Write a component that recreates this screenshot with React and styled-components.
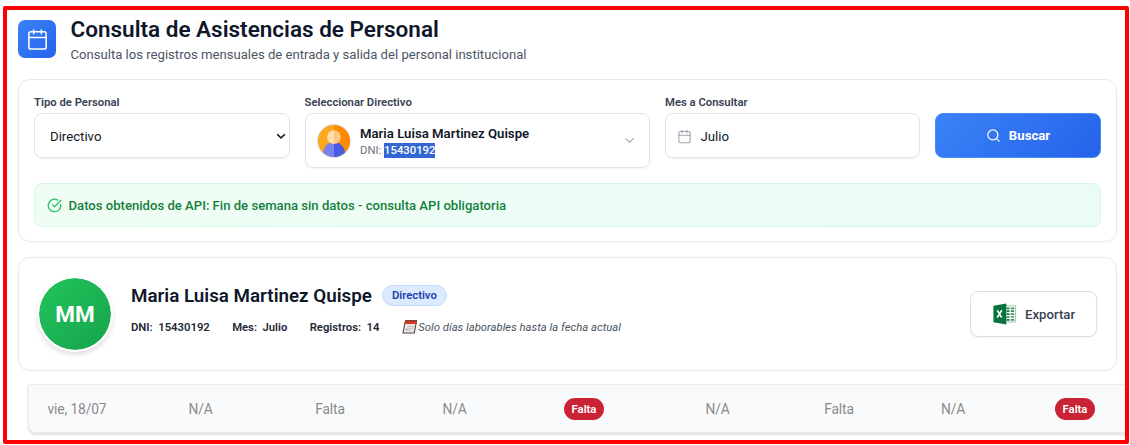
import React from "react";
import styled, { createGlobalStyle } from "styled-components";
import { Calendar, Search, ChevronDown, CircleCheckBig } from "lucide-react";

const GlobalStyle = createGlobalStyle`
  * { box-sizing: border-box; }
  body {
    margin: 0;
    background: #fff;
    color: #0f172a;
    font-family: Roboto, "Liberation Sans", sans-serif;
    overflow: hidden;
  }
`;

const Frame = styled.main`
  margin: 6px 1px 1px 3px;
  width: 1126px;
  height: 438px;
  border: 4px solid #fe0000;
  border-radius: 2px;
  padding: 5px 0 0 11px;
  overflow: hidden;
  white-space: nowrap;
`;

const Header = styled.header`
  display: flex;
  gap: 14.5px;
  height: 64px;
`;

const HeaderIcon = styled.div`
  display: flex;
  align-items: center;
  justify-content: center;
  width: 38px;
  height: 38px;
  margin-top: 5px;
  border-radius: 7px;
  color: #fff;
  background: linear-gradient(135deg, #3b82f6, #2563eb);
`;

const Title = styled.h1`
  margin: 0;
  font-size: 22.5px;
  line-height: 29px;
  font-weight: 600;
`;

const Subtitle = styled.p`
  margin: 2px 0 0;
  font-size: 13.12px;
  line-height: 18px;
  color: #4b5563;
`;

const Card = styled.section`
  width: 1099px;
  border: 1px solid #e9eaed;
  border-radius: 12px;
  background: #fff;
  box-shadow: 0 1px 2px rgba(0, 0, 0, 0.03);
`;

const FilterCard = styled(Card)`
  height: 163px;
  padding: 13px 15px;
`;

const Filters = styled.div`
  display: grid;
  grid-template-columns: 255.5px 345.5px 255px 166px;
  gap: 15px;
  height: 90px;
  align-items: start;
`;

const Label = styled.div`
  height: 20px;
  font-size: 11.3px;
  line-height: 19px;
  font-weight: 600;
  color: #374151;
`;

const Control = styled.div`
  display: flex;
  align-items: center;
  height: ${(p) => (p.$tall ? 55 : 45)}px;
  padding: ${(p) => p.$pad};
  gap: ${(p) => p.$gap || 0}px;
  border: 1px solid #e2e4e9;
  border-radius: 8px;
  font-size: 13.2px;
  color: #111827;
  box-shadow: 0 1px 2px rgba(0, 0, 0, 0.05);
`;

const Grow = styled.div`
  flex: 1;
`;

const PersonName = styled.div`
  padding-top: 2px;
  font-size: 13.2px;
  line-height: 17px;
  font-weight: 600;
`;

const PersonDni = styled.div`
  font-size: 11.3px;
  line-height: 17px;
  color: #6b7280;
`;

const Selected = styled.span`
  display: inline-block;
  height: 15px;
  line-height: 15px;
  color: #fff;
  font-weight: 500;
  background: #3367d1;
`;

const SearchButton = styled.button`
  display: flex;
  align-items: center;
  justify-content: center;
  gap: 8px;
  width: 166px;
  height: 45px;
  margin-top: 20px;
  padding: 0;
  border: 1px solid #4b8bf5;
  border-radius: 8px;
  font: 700 13.2px Roboto, sans-serif;
  color: #fff;
  background: linear-gradient(135deg, #3b82f6, #2563eb);
`;

const Notice = styled.div`
  display: flex;
  align-items: center;
  gap: 7px;
  width: 1067px;
  height: 44px;
  padding: 0 12px 0 11.5px;
  border: 1px solid #d1fae0;
  border-radius: 8px;
  font-size: 13.12px;
  font-weight: 500;
  color: #15803d;
  background: linear-gradient(135deg, #f0fdf4, #ecfdf5 50%, #eafcf4);
`;

const ProfileCard = styled(Card)`
  display: flex;
  align-items: center;
  height: 114px;
  margin-top: 15px;
  padding: 0 19px 0 18px;
`;

const Avatar = styled.div`
  display: flex;
  align-items: center;
  justify-content: center;
  width: 76px;
  height: 76px;
  border: 2px solid #fff;
  border-radius: 50%;
  font-size: 22.5px;
  font-weight: 700;
  color: #fff;
  background: linear-gradient(135deg, #22c55e, #16a34a) border-box;
  background-clip: padding-box;
  box-shadow: 0 3px 5px rgba(0, 0, 0, 0.13);
`;

const Profile = styled.div`
  flex: 1;
  margin: 0 0 10px 18px;
`;

const NameRow = styled.div`
  display: flex;
  align-items: center;
  gap: 10px;
`;

const Name = styled.h2`
  margin: 0;
  font-size: 18.8px;
  line-height: 26px;
  font-weight: 600;
`;

const RoleBadge = styled.span`
  height: 21px;
  padding: 0 9px;
  border: 1px solid #bfdbfe;
  border-radius: 11px;
  font-size: 11.3px;
  line-height: 19px;
  font-weight: 600;
  color: #1e40af;
  background: #dbeafe;
`;

const MetaRow = styled.div`
  display: flex;
  gap: 22.3px;
  margin-top: 10px;
  font-size: 11.3px;
  line-height: 17px;
  font-weight: 600;
  color: #1f2937;
`;

const MetaItem = styled.span`
  display: flex;
  gap: 5.5px;
`;

const Note = styled.span`
  display: flex;
  align-items: center;
  gap: 0.5px;
  font-weight: 400;
  font-style: italic;
  color: #4b5563;
`;

const ExportButton = styled.button`
  display: flex;
  align-items: center;
  gap: 8.5px;
  width: 127px;
  height: 46px;
  padding: 0 0 0 21.5px;
  border: 1px solid #dcdfe5;
  border-radius: 8px;
  font: 500 13.2px Roboto, sans-serif;
  color: #374151;
  background: #fff;
  box-shadow: 0 1px 2px rgba(0, 0, 0, 0.05);
`;

const Table = styled.div`
  display: grid;
  grid-template-columns: 96px 151px 108px 141px 118px 149px 94px 134px 110px;
  align-items: center;
  justify-items: center;
  width: 1130px;
  height: 49px;
  margin: 13px 0 0 10px;
  border: 1px solid #e9ebee;
  border-radius: 0 0 8px 8px;
  background: #f9fafc;
  font-size: 13.8px;
  letter-spacing: -0.12px;
  color: #8b8b8b;
  box-shadow: 0 2px 3px rgba(0, 0, 0, 0.13);
`;

const Tag = styled.span`
  height: 22px;
  padding: 0 7.5px;
  border-radius: 11px;
  font-size: 11.3px;
  letter-spacing: 0;
  line-height: 23px;
  font-weight: 600;
  color: #fff;
  background: #c92335;
`;

const PersonPicture = () => (
  <svg width="34" height="34" viewBox="0 0 34 34">
    <defs>
      <clipPath id="disc"><circle cx="17" cy="17" r="16" /></clipPath>
    </defs>
    <circle cx="17" cy="17" r="16.7" fill="#cfd3da" />
    <g clipPath="url(#disc)">
      <path d="M0 0H17V34H0z" fill="#ffa61f" />
      <path d="M17 0H34V34H17z" fill="#ff8a00" />
      <path d="M5.5 34C5.5 23 10 18.3 17 18.3V34z" fill="#7c83ee" />
      <path d="M28.5 34C28.5 23 24 18.3 17 18.3V34z" fill="#4a5be4" />
    </g>
    <path d="M17 6.2a6.9 6.9 0 0 0 0 13.8z" fill="#ffdda8" />
    <path d="M17 6.2a6.9 6.9 0 0 1 0 13.8z" fill="#ffc882" />
  </svg>
);

const NotepadIcon = () => (
  <svg width="16" height="14" viewBox="0 0 16 14">
    <path d="M3.4 1H14.6L12.2 13H1z" fill="#eceae8" stroke="#4a4544" strokeWidth="1.1" />
    <path d="M3.4 .8H14.8L14.2 4H2.8z" fill="#d9391f" />
    <path d="M3.4 .8H14.8" stroke="#5c2720" strokeWidth=".9" />
    <path d="M5 6.3H12M4.6 8.3H11.6M4.2 10.3H9" stroke="#b9b4b2" strokeWidth=".8" />
    <path d="M3.5 9.5h1.6" stroke="#e48a78" strokeWidth="1.2" />
  </svg>
);

const ExcelIcon = () => (
  <svg width="24" height="22" viewBox="0 0 24 22">
    <path d="M12 2.8H22.6V19H12z" fill="#fff" stroke="#8fc3a5" strokeWidth=".9" />
    <path d="M13.5 5.3h3M13.5 8.2h3M13.5 11.1h3M13.5 14h3M13.5 16.8h3" stroke="#1d7a48" strokeWidth="1.7" />
    <path d="M17.7 5.3h3.5M17.7 8.2h3.5M17.7 11.1h3.5M17.7 14h3.5M17.7 16.8h3.5" stroke="#3c9262" strokeWidth="1.7" />
    <path d="M.4 2.8L13.3 .4V21.6L.4 19.2z" fill="#08733d" />
    <path d="M4.3 7.3L8.7 14.5M8.8 7.3L4.2 14.5" stroke="#fff" strokeWidth="1.6" />
  </svg>
);

const SelectArrow = () => (
  <svg width="10" height="7" viewBox="0 0 10 7" fill="none">
    <path d="M1.2 1.3L5 5L8.8 1.3" stroke="#111" strokeWidth="1.6" />
  </svg>
);

const cells = ["vie, 18/07", "N/A", "Falta", "N/A", "tag", "N/A", "Falta", "N/A", "tag"];

const details = [
  ["DNI:", "15430192"],
  ["Mes:", "Julio"],
  ["Registros:", "14"],
];

export default function App() {
  return (
    <>
      <GlobalStyle />
      <Frame>
        <Header>
          <HeaderIcon><Calendar size={23} strokeWidth={1.6} /></HeaderIcon>
          <div>
            <Title>Consulta de Asistencias de Personal</Title>
            <Subtitle>Consulta los registros mensuales de entrada y salida del personal institucional</Subtitle>
          </div>
        </Header>

        <FilterCard>
          <Filters>
            <div>
              <Label>Tipo de Personal</Label>
              <Control $pad="1px 3px 0 15px">
                <Grow>Directivo</Grow>
                <SelectArrow />
              </Control>
            </div>
            <div>
              <Label>Seleccionar Directivo</Label>
              <Control $tall $pad="0 12px 0 11px" $gap={9.5}>
                <PersonPicture />
                <Grow>
                  <PersonName>Maria Luisa Martinez Quispe</PersonName>
                  <PersonDni>DNI: <Selected>15430192</Selected></PersonDni>
                </Grow>
                <ChevronDown size={15} strokeWidth={1.7} color="#9ca3af" />
              </Control>
            </div>
            <div>
              <Label>Mes a Consultar</Label>
              <Control $pad="1px 11px 0 10.5px" $gap={9}>
                <Calendar size={15} strokeWidth={1.7} color="#9ca3af" />
                Julio
              </Control>
            </div>
            <SearchButton>
              <Search size={15} strokeWidth={2} />
              Buscar
            </SearchButton>
          </Filters>
          <Notice>
            <CircleCheckBig size={15} strokeWidth={2} color="#22c55e" />
            Datos obtenidos de API: Fin de semana sin datos - consulta API obligatoria
          </Notice>
        </FilterCard>

        <ProfileCard>
          <Avatar>MM</Avatar>
          <Profile>
            <NameRow>
              <Name>Maria Luisa Martinez Quispe</Name>
              <RoleBadge>Directivo</RoleBadge>
            </NameRow>
            <MetaRow>
              {details.map(([label, value]) => (
                <MetaItem key={label}>
                  <span>{label}</span>
                  <span>{value}</span>
                </MetaItem>
              ))}
              <Note>
                <NotepadIcon />
                Solo días laborables hasta la fecha actual
              </Note>
            </MetaRow>
          </Profile>
          <ExportButton>
            <ExcelIcon />
            Exportar
          </ExportButton>
        </ProfileCard>

        <Table>
          {cells.map((cell, i) => (cell === "tag" ? <Tag key={i}>Falta</Tag> : <span key={i}>{cell}</span>))}
        </Table>
      </Frame>
    </>
  );
}
